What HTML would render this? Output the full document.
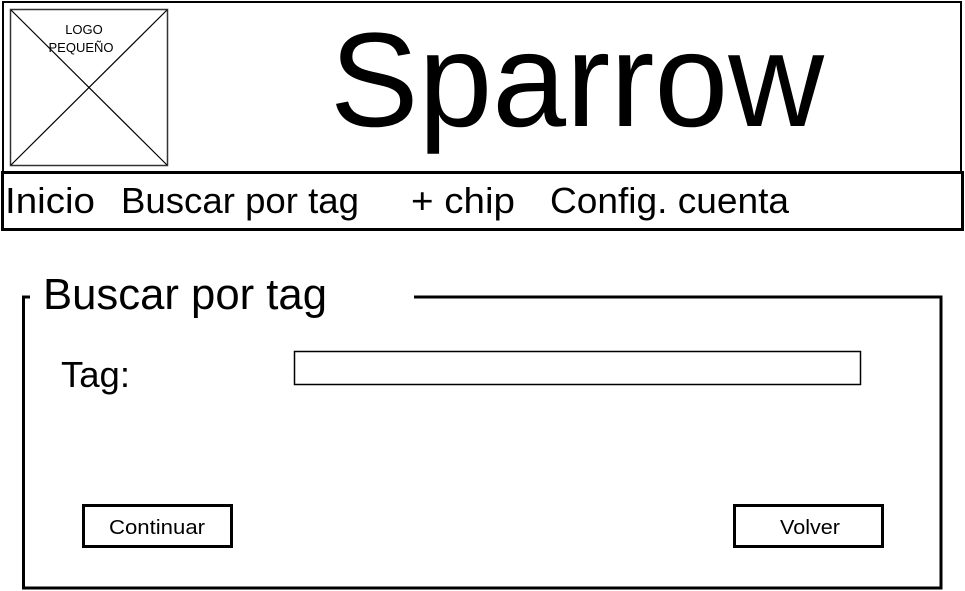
<!DOCTYPE html>
<html><head><meta charset="utf-8"><style>html,body{margin:0;padding:0;background:#fff;width:965px;height:591px;overflow:hidden}</style></head><body>
<svg width="965" height="591" xmlns="http://www.w3.org/2000/svg" font-family="Liberation Sans, sans-serif" fill="#000">
<rect x="3" y="2" width="958" height="170" fill="none" stroke="#000" stroke-width="2"/>
<rect x="10.5" y="9.5" width="157" height="156" fill="none" stroke="#333" stroke-width="1.5"/>
<line x1="11" y1="10" x2="167" y2="165" stroke="#000" stroke-width="1.2"/>
<line x1="167" y1="10" x2="11" y2="165" stroke="#000" stroke-width="1.2"/>
<text x="84" y="34" font-size="13" text-anchor="middle">LOGO</text>
<text x="81" y="52" font-size="13" text-anchor="middle">PEQUEÑO</text>
<text x="330" y="126" font-size="134" textLength="494" lengthAdjust="spacingAndGlyphs">Sparrow</text>
<rect x="2.5" y="172.5" width="960" height="57" fill="none" stroke="#000" stroke-width="3"/>
<text x="5" y="213" font-size="36" textLength="90" lengthAdjust="spacingAndGlyphs">Inicio</text>
<text x="121" y="213" font-size="36" textLength="238" lengthAdjust="spacingAndGlyphs">Buscar por tag</text>
<text x="411" y="213" font-size="36" textLength="104" lengthAdjust="spacingAndGlyphs">+ chip</text>
<text x="550" y="213" font-size="36" textLength="239" lengthAdjust="spacingAndGlyphs">Config. cuenta</text>
<path d="M30 297 H23.5 V588 H941 V297 H414" fill="none" stroke="#000" stroke-width="3"/>
<text x="43" y="309" font-size="44" textLength="284" lengthAdjust="spacingAndGlyphs">Buscar por tag</text>
<text x="61" y="387" font-size="36" textLength="69" lengthAdjust="spacingAndGlyphs">Tag:</text>
<rect x="294.5" y="351.5" width="566" height="33" fill="none" stroke="#000" stroke-width="1.5"/>
<rect x="83.5" y="505.5" width="148" height="41" fill="none" stroke="#000" stroke-width="3"/>
<text x="157" y="534" font-size="20" text-anchor="middle" textLength="96" lengthAdjust="spacingAndGlyphs">Continuar</text>
<rect x="734.5" y="505.5" width="148" height="41" fill="none" stroke="#000" stroke-width="3"/>
<text x="810" y="534" font-size="20" text-anchor="middle" textLength="60" lengthAdjust="spacingAndGlyphs">Volver</text>
</svg>
</body></html>
